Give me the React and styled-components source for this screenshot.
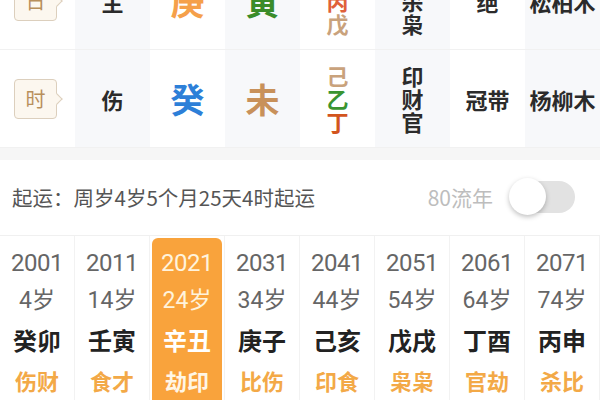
import React from "react"
import styled, { createGlobalStyle } from "styled-components"

const GlobalStyle = createGlobalStyle`
  html, body {
    margin: 0;
    padding: 0;
    background: #fff;
    overflow: hidden;
  }
  body {
    font-family: Roboto, "Noto Sans CJK SC", sans-serif;
  }
`

const CJK = `"Noto Sans CJK SC", "Noto Sans", sans-serif`

const Screen = styled.div`
  width: 600px;
  height: 400px;
  overflow: hidden;
  display: flex;
  flex-direction: column;
`

const Pillars = styled.div`
  margin-top: -48px;
  display: flex;
  flex-direction: column;
`

const PillarRow = styled.div`
  display: grid;
  grid-template-columns: repeat(8, 75px);
  height: 97px;
  border-bottom: 1px solid #f1f1f1;
`

const Cell = styled.div`
  display: flex;
  align-items: center;
  justify-content: center;
  background: ${(p) => (p.$shade ? "#f7f8fa" : "#fff")};
  font-family: ${CJK};
`

const Badge = styled.div`
  position: relative;
  width: 43px;
  height: 40px;
  box-sizing: border-box;
  border: 1px solid #dccfbd;
  border-radius: 4px;
  background: #fcf7ef;
  color: #b88f5c;
  font-size: 20px;
  display: flex;
  align-items: center;
  justify-content: center;
  margin-right: 4px;

  &::after {
    content: "";
    position: absolute;
    right: -5px;
    top: 50%;
    width: 7px;
    height: 7px;
    margin-top: -4px;
    background: #fcf7ef;
    border-top: 1px solid #dccfbd;
    border-right: 1px solid #dccfbd;
    transform: rotate(45deg);
  }
`

const Bold = styled.span`
  font-size: ${(p) => p.$size || 22}px;
  font-weight: 700;
  color: ${(p) => p.$color || "#2b2b2b"};
  line-height: 1;
`

const Stack = styled.div`
  display: flex;
  flex-direction: column;
  align-items: center;
`

const StackChar = styled.span`
  font-size: 22px;
  line-height: 23px;
  font-weight: ${(p) => (p.$bold ? 700 : 600)};
  color: ${(p) => p.$color || "#2b2b2b"};
`

const Gap = styled.div`
  height: 12px;
  background: #f6f6f6;
`

const StartRow = styled.div`
  height: 76px;
  display: flex;
  align-items: center;
  padding: 0 25px 0 12px;
  font-family: ${CJK};
  font-size: 20.5px;
  color: #555;
`

const StartText = styled.span`
  flex: 1;
`

const FlowLabel = styled.span`
  color: #bdbdbd;
  font-size: 21px;
  margin-right: 20px;
`

const Toggle = styled.div`
  position: relative;
  width: 62px;
  height: 32px;
  border-radius: 16px;
  background: #e2e2e2;
`

const Knob = styled.div`
  position: absolute;
  left: -4px;
  top: -3px;
  width: 37px;
  height: 37px;
  border-radius: 50%;
  background: #fff;
  box-shadow: 0 2px 5px rgba(0, 0, 0, 0.25);
`

const Luck = styled.div`
  display: grid;
  grid-template-columns: repeat(8, 75px);
  border-top: 1px solid #f0f0f0;
  flex: 1;
`

const LuckCol = styled.div`
  display: flex;
  flex-direction: column;
  align-items: center;
  border-right: 1px solid #f2f2f2;
  padding-top: 2px;
`

const LuckCard = styled.div`
  align-self: stretch;
  flex: 1;
  margin: 0 2px;
  border-radius: 6px 6px 0 0;
  background: ${(p) => (p.$on ? "#f9a33c" : "transparent")};
  display: flex;
  flex-direction: column;
  align-items: center;
`

const Year = styled.div`
  margin-top: 6px;
  height: 38px;
  line-height: 38px;
  font-family: Roboto, sans-serif;
  font-size: 24px;
  letter-spacing: -0.5px;
  color: ${(p) => (p.$on ? "#fff3dc" : "#666")};
`

const Age = styled.div`
  height: 38px;
  line-height: 38px;
  font-family: Roboto, ${CJK};
  font-size: 23px;
  color: ${(p) => (p.$on ? "#fff3dc" : "#666")};
`

const GanZhi = styled.div`
  height: 40px;
  line-height: 40px;
  font-family: ${CJK};
  font-size: 24px;
  font-weight: 700;
  color: ${(p) => (p.$on ? "#fff" : "#222")};
`

const Gods = styled.div`
  height: 40px;
  line-height: 40px;
  font-family: ${CJK};
  font-size: 22px;
  font-weight: 700;
  color: ${(p) => (p.$on ? "#fff6e6" : "#f3a947")};
`

const TAN = "#c9a27c"
const GREEN = "#3a9430"
const RED = "#d2541e"

const rows = [
  {
    label: "日",
    god: "主",
    stem: ["庚", "#f5a04a"],
    branch: ["寅", "#3a8c2a"],
    hidden: [["甲", GREEN], ["丙", "#e0603a"], ["戊", TAN]],
    stars: ["财", "杀", "枭"],
    phase: "绝",
    nayin: "松柏木",
  },
  {
    label: "时",
    god: "伤",
    stem: ["癸", "#2d7fd8"],
    branch: ["未", "#c8915a"],
    hidden: [["己", TAN], ["乙", GREEN], ["丁", RED]],
    stars: ["印", "财", "官"],
    phase: "冠带",
    nayin: "杨柳木",
  },
]

const luck = [
  ["2001", "4岁", "癸卯", "伤财"],
  ["2011", "14岁", "壬寅", "食才"],
  ["2021", "24岁", "辛丑", "劫印"],
  ["2031", "34岁", "庚子", "比伤"],
  ["2041", "44岁", "己亥", "印食"],
  ["2051", "54岁", "戊戌", "枭枭"],
  ["2061", "64岁", "丁酉", "官劫"],
  ["2071", "74岁", "丙申", "杀比"],
]

const App = () => (
  <Screen>
    <GlobalStyle />
    <Pillars>
      {rows.map((r) => (
        <PillarRow key={r.label}>
          <Cell>
            <Badge>{r.label}</Badge>
          </Cell>
          <Cell $shade>
            <Bold>{r.god}</Bold>
          </Cell>
          <Cell>
            <Bold $size={34} $color={r.stem[1]}>{r.stem[0]}</Bold>
          </Cell>
          <Cell $shade>
            <Bold $size={34} $color={r.branch[1]}>{r.branch[0]}</Bold>
          </Cell>
          <Cell>
            <Stack>
              {r.hidden.map(([c, col]) => (
                <StackChar key={c} $color={col}>{c}</StackChar>
              ))}
            </Stack>
          </Cell>
          <Cell $shade>
            <Stack>
              {r.stars.map((s, i) => (
                <StackChar key={i} $bold>{s}</StackChar>
              ))}
            </Stack>
          </Cell>
          <Cell>
            <Bold>{r.phase}</Bold>
          </Cell>
          <Cell $shade>
            <Bold>{r.nayin}</Bold>
          </Cell>
        </PillarRow>
      ))}
    </Pillars>
    <Gap />
    <StartRow>
      <StartText>起运：周岁4岁5个月25天4时起运</StartText>
      <FlowLabel>80流年</FlowLabel>
      <Toggle>
        <Knob />
      </Toggle>
    </StartRow>
    <Luck>
      {luck.map(([y, a, g, s], i) => {
        const on = i === 2
        return (
          <LuckCol key={y}>
            <LuckCard $on={on}>
              <Year $on={on}>{y}</Year>
              <Age $on={on}>{a}</Age>
              <GanZhi $on={on}>{g}</GanZhi>
              <Gods $on={on}>{s}</Gods>
            </LuckCard>
          </LuckCol>
        )
      })}
    </Luck>
  </Screen>
)

export default App
